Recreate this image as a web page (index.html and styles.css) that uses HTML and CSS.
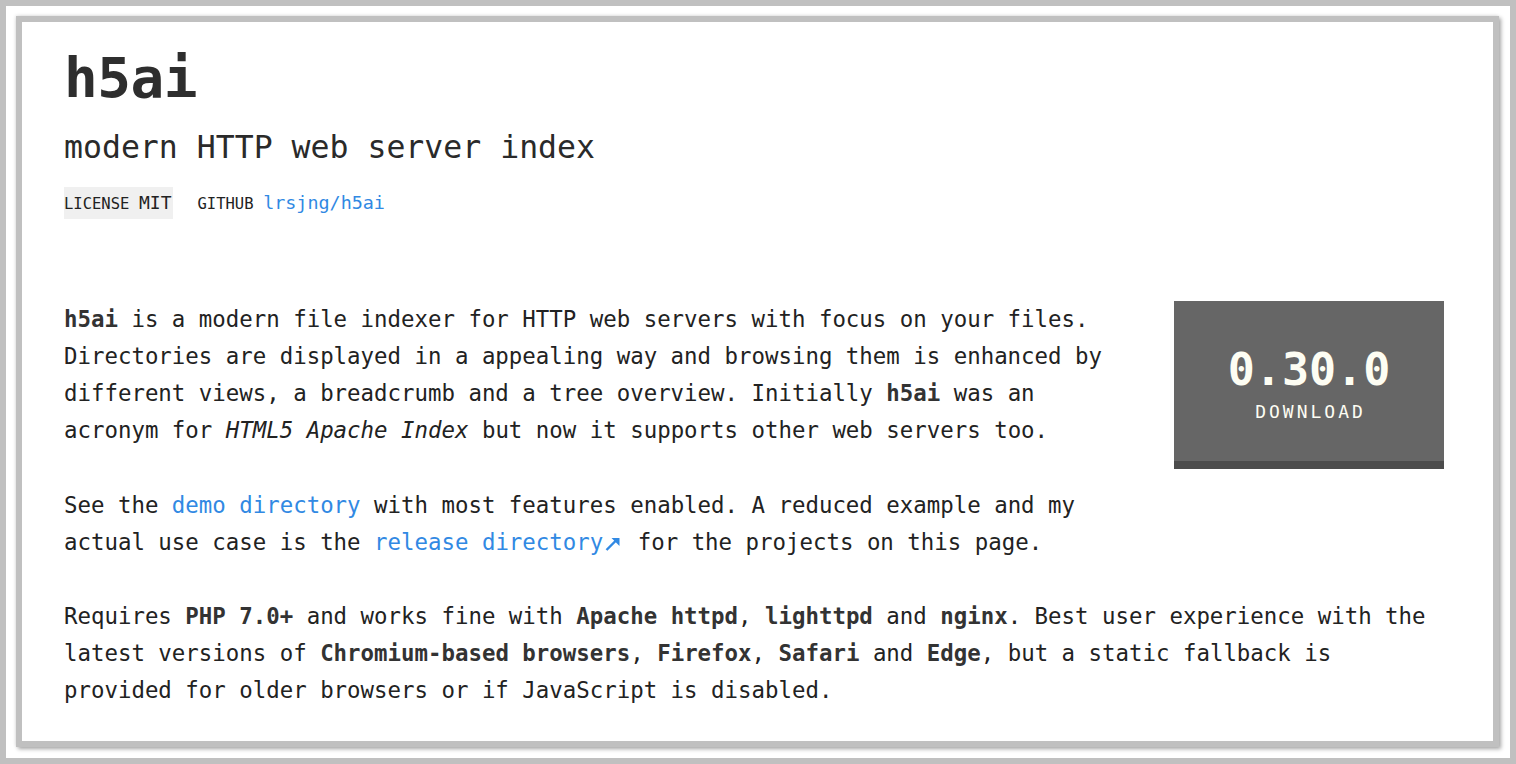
FILE: index.html
```html
<!DOCTYPE html>
<html lang="en">
<head>
<meta charset="utf-8">
<title>h5ai</title>
<link rel="stylesheet" href="styles.css">
</head>
<body>
<div class="frame">
  <div class="page">
    <header class="head">
      <h1 class="title">h5ai</h1>
      <p class="subtitle">modern HTTP web server index</p>
      <div class="badges">
        <span class="badge badge-grey"><span class="badge-label">LICENSE</span> <span class="badge-value">MIT</span></span>
        <span class="badge"><span class="badge-label">GITHUB</span> <a class="badge-value link" href="#">lrsjng/h5ai</a></span>
      </div>
    </header>
    <main class="intro">
      <div class="intro-text">
        <p class="para"><b>h5ai</b> is a modern file indexer for HTTP web servers with focus on your files. Directories are displayed in a appealing way and browsing them is enhanced by different views, a breadcrumb and a tree overview. Initially <b>h5ai</b> was an acronym for <i>HTML5 Apache Index</i> but now it supports other web servers too.</p>
        <p class="para">See the <a class="link" href="#">demo directory</a> with most features enabled. A reduced example and my actual use case is the <a class="link" href="#">release directory<svg class="ext" viewBox="0 0 21 14" width="21" height="14" aria-hidden="true"><path d="M3.5 13 L14 2.5" stroke="currentColor" stroke-width="2.4" fill="none"/><path d="M8.5 1 H16.5 V9 Z" fill="currentColor"/></svg></a> for the projects on this page.</p>
      </div>
      <a class="download" href="#">
        <span class="dl-version">0.30.0</span>
        <span class="dl-label">DOWNLOAD</span>
      </a>
    </main>
    <p class="para para-full">Requires <b>PHP 7.0+</b> and works fine with <b>Apache httpd</b>, <b>lighttpd</b> and <b>nginx</b>. Best user experience with the latest versions of <b>Chromium-based browsers</b>, <b>Firefox</b>, <b>Safari</b> and <b>Edge</b>, but a static fallback is provided for older browsers or if JavaScript is disabled.</p>
  </div>
</div>
</body>
</html>
```
FILE: styles.css
```css
html, body {
  margin: 0;
  padding: 0;
  height: 100%;
}
body {
  font-family: "DejaVu Sans Mono", "Liberation Mono", monospace;
  color: #222;
  background: #fff;
}
.frame {
  box-sizing: border-box;
  height: 100%;
  border: 6px solid #c0c0c0;
  padding: 10px 11px 11px 10px;
  display: flex;
}
.page {
  flex: 1;
  box-sizing: border-box;
  border: 6px solid #c0c0c0;
  box-shadow: 2px 2px 4px rgba(0, 0, 0, 0.35), -1px -1px 3px rgba(0, 0, 0, 0.08);
  background: #fff;
  padding: 24px 49px 0 42px;
}
.title {
  margin: 0;
  font-size: 56px;
  line-height: 64px;
  font-weight: bold;
  color: #2e2e2e;
  letter-spacing: -0.5px;
}
.subtitle {
  margin: 17px 0 0;
  font-size: 31.5px;
  line-height: 40px;
  font-weight: normal;
  color: #2a2a2a;
}
.badges {
  margin-top: 20px;
  display: flex;
  gap: 24px;
  height: 32px;
}
.badge {
  display: inline-block;
  line-height: 32px;
  height: 32px;
  white-space: nowrap;
}
.badge-grey {
  background: #f0f0f0;
  padding-right: 2px;
}
.badge-label {
  font-size: 15.5px;
  color: #222;
}
.badge-value {
  font-size: 18px;
  color: #222;
}
.link {
  color: #3189e3;
  text-decoration: none;
}
.badges .link {
  color: #3189e3;
  font-size: 18.4px;
}
.intro {
  margin-top: 82px;
  display: grid;
  grid-template-columns: 1fr 270px;
  column-gap: 50px;
  align-items: start;
}
.para {
  margin: 0;
  font-size: 22.4px;
  line-height: 37px;
  color: #222;
}
.para + .para {
  margin-top: 38px;
}
.para b {
  color: #333;
}
.para-full {
  margin-top: 37px;
}
.ext {
  display: inline-block;
  vertical-align: -1px;
}
.download {
  box-sizing: border-box;
  height: 168px;
  background: #666;
  border-bottom: 8px solid #4c4c4c;
  display: flex;
  flex-direction: column;
  align-items: center;
  padding-top: 44px;
  text-decoration: none;
  color: #fdfdf3;
}
.dl-version {
  font-size: 45px;
  line-height: 50px;
  font-weight: bold;
}
.dl-label {
  font-size: 18px;
  line-height: 22px;
  letter-spacing: 3px;
  margin-right: -3px;
  margin-top: 6px;
}
```
